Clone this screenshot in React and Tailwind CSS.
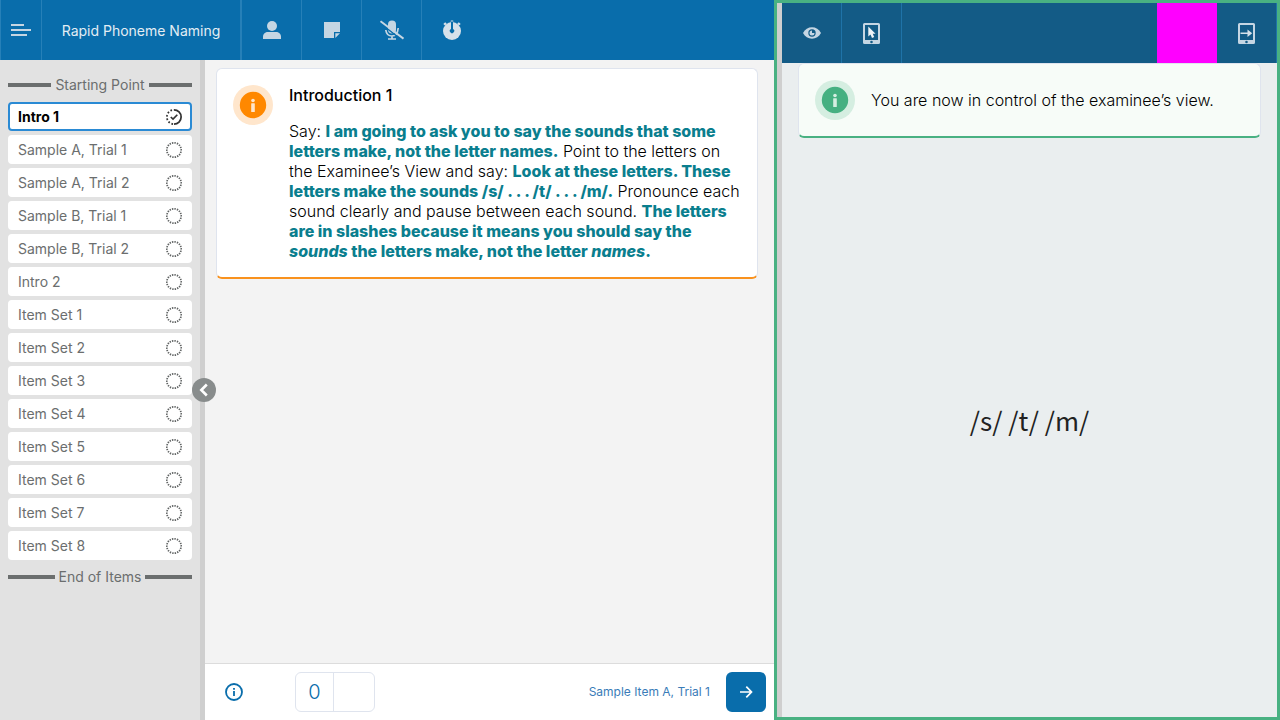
import React from "react";

const ITEMS = [
  "Sample A, Trial 1",
  "Sample A, Trial 2",
  "Sample B, Trial 1",
  "Sample B, Trial 2",
  "Intro 2",
  "Item Set 1",
  "Item Set 2",
  "Item Set 3",
  "Item Set 4",
  "Item Set 5",
  "Item Set 6",
  "Item Set 7",
  "Item Set 8",
];

function DottedCircle() {
  return (
    <svg width="16" height="16" viewBox="0 0 16 16" fill="none" aria-hidden="true">
      <circle cx="8" cy="8" r="7.2" stroke="#5f6262" strokeWidth="1.7" pathLength="54" strokeDasharray="1.7 1.3" strokeDashoffset="1" />
    </svg>
  );
}

function ProgressCircle() {
  return (
    <svg width="16" height="16" viewBox="0.8 0.8 16.4 16.4" fill="none" stroke="#333" aria-hidden="true">
      <path d="M9 1.7A7.3 7.3 0 0 1 9 16.3" strokeWidth="1.8" />
      <path d="M9 16.3A7.3 7.3 0 0 1 9 1.7" strokeWidth="1.8" strokeDasharray="1.7 1.9" strokeDashoffset="-1" />
      <path d="M5.7 9L8 11.2L12.4 6.7" strokeWidth="1.7" />
    </svg>
  );
}

function InfoBadge({ ring, disc, mark }) {
  return (
    <svg className="shrink-0" width="40" height="40" viewBox="0 0 40 40" aria-hidden="true">
      <circle cx="20" cy="20" r="20" fill={ring} />
      <circle cx="20" cy="20" r="13.2" fill={disc} />
      <circle cx="20" cy="15.5" r="1.8" fill={mark} />
      <rect x="18.2" y="18.3" width="3.6" height="8.7" rx="0.5" fill={mark} />
    </svg>
  );
}

function ToolButton({ label, className = "", children }) {
  return (
    <button type="button" aria-label={label} className={"flex h-full w-15 shrink-0 items-center justify-center " + className}>
      {children}
    </button>
  );
}

function Divider({ children }) {
  return (
    <div className="flex h-5 items-center gap-1 text-sm leading-5 text-[#6b6e6e]">
      <span className="h-1 flex-1 bg-[#6b6e6e]" />
      {children}
      <span className="h-1 flex-1 bg-[#6b6e6e]" />
    </div>
  );
}

function Tablet({ children }) {
  return (
    <svg width="17" height="21" viewBox="0.5 0.5 17 21" aria-hidden="true">
      <path fillRule="evenodd" fill="#c5d6e3" d="M2 0.5H16A1.5 1.5 0 0 1 17.5 2V20A1.5 1.5 0 0 1 16 21.5H2A1.5 1.5 0 0 1 0.5 20V2A1.5 1.5 0 0 1 2 0.5ZM2.5 2.5V17.5H15.5V2.5ZM9 18.2A1.3 1.3 0 1 0 9 20.8A1.3 1.3 0 1 0 9 18.2Z" />
      {children}
    </svg>
  );
}

function Say({ children }) {
  return <strong className="font-extrabold text-[#0a7e8e]">{children}</strong>;
}

export default function App() {
  return (
    <div className="flex h-screen w-full font-['Inter','Liberation_Sans',sans-serif] text-black">
      <div className="flex min-w-0 flex-1 flex-col">
        <header className="flex h-15 shrink-0 items-stretch bg-[#096dab]">
          <button type="button" aria-label="Menu" className="flex w-[42px] items-center justify-center border-x border-[#2680b8]">
            <svg width="20" height="12" viewBox="0 0 20 12" fill="#c5d6e3" aria-hidden="true">
              <path d="M0 0H13V2H0ZM0 5H20V7H0ZM0 10H16V12H0Z" />
            </svg>
          </button>
          <h1 className="flex w-[200px] items-center justify-center border-r-2 border-[#2680b8] pt-0.5 text-sm text-[#e3edf4]">
            Rapid Phoneme Naming
          </h1>
          <ToolButton label="Examinee" className="border-r border-[#2680b8]">
            <svg width="18" height="18" viewBox="0 0 18 18" fill="#c5d6e3" aria-hidden="true">
              <circle cx="9" cy="5" r="5" />
              <path d="M0 18V16C0 12.8 2.3 11 5 11H13C15.7 11 18 12.8 18 16V18Q18 18 17 18H1Q0 18 0 18Z" />
            </svg>
          </ToolButton>
          <ToolButton label="Notes" className="border-r border-[#2680b8]">
            <svg width="16" height="16" viewBox="0 0 16 16" fill="#c5d6e3" aria-hidden="true">
              <path d="M0 0H16V10H10V16H0Z" />
              <path d="M11.3 11.3H16L11.3 16Z" />
            </svg>
          </ToolButton>
          <ToolButton label="Microphone off" className="border-r border-[#2680b8]">
            <svg width="24" height="20" viewBox="0 0 24 20" aria-hidden="true">
              <rect x="8" y="0.5" width="8" height="13" rx="4" fill="#c5d6e3" />
              <path d="M5.8 10C6.3 14 8.8 16 12 16S17.7 14 18.2 8M12 16V19M8 19H16" fill="none" stroke="#c5d6e3" strokeWidth="1.7" />
              <path d="M-0.5 2.5L22.5 20.5" stroke="#096dab" strokeWidth="1.5" />
              <path d="M0.5 1.2L23.5 18.7" stroke="#c5d6e3" strokeWidth="2" />
            </svg>
          </ToolButton>
          <ToolButton label="Timer">
            <svg width="18" height="20" viewBox="0 0 18 20" fill="#d6e1ea" aria-hidden="true">
              <path d="M7.8 0.5H10.2V3H7.8ZM0.3 4L2.2 2.2L3.8 3.7L2 5.4ZM15.8 2.2L17.7 4L16 5.4L14.2 3.7Z" />
              <circle cx="9" cy="11" r="9" />
              <path d="M8 1.5H10V9A2.2 2.2 0 1 1 8 9Z" fill="#096dab" />
            </svg>
          </ToolButton>
        </header>

        <div className="flex min-h-0 flex-1">
          <nav aria-label="Items" className="relative w-[205px] shrink-0 border-r-[5px] border-[#cfcfcf] bg-[#e2e2e2] px-2 pt-[15px]">
            <Divider>Starting Point</Divider>
            <ul className="mt-[7px] mb-[7px] flex flex-col gap-1">
              <li>
                <button type="button" aria-current="true" className="flex h-[29px] w-full items-center justify-between rounded border-2 border-[#2a8ad4] bg-white px-2 text-sm font-bold">
                  Intro 1
                  <ProgressCircle />
                </button>
              </li>
              {ITEMS.map((label) => (
                <li key={label}>
                  <button type="button" className="flex h-[29px] w-full items-center justify-between rounded border-2 border-white bg-white px-2 text-sm text-[#6b6e6e]">
                    {label}
                    <DottedCircle />
                  </button>
                </li>
              ))}
            </ul>
            <Divider>End of Items</Divider>
            <button type="button" aria-label="Collapse item list" className="absolute top-1/2 -right-4 flex size-6 -translate-y-1/2 items-center justify-center rounded-full bg-[#888c8c]">
              <svg width="10" height="14" viewBox="0 0 10 14" fill="none" stroke="#fff" strokeWidth="2.6" aria-hidden="true">
                <path d="M7.8 1.5L2.3 7L7.8 12.5" />
              </svg>
            </button>
          </nav>

          <div className="flex min-w-0 flex-1 flex-col bg-[#f3f3f3]">
            <main className="min-h-0 flex-1 pt-2 pr-4 pl-[11px]">
              <section className="flex gap-4 rounded-md border border-b-2 border-[#dfe4ee] border-b-[#f9921e] bg-white p-4">
                <InfoBadge ring="#ffe6cc" disc="#ff8800" mark="#ffe6cc" />
                <div>
                  <h2 className="mb-4 text-base leading-5 font-medium">Introduction 1</h2>
                  <p className="text-base leading-5 font-light">
                    Say: <Say>I am going to ask you to say the sounds that some letters make, not the letter names.</Say> Point
                    to the letters on the Examinee’s View and say: <Say>Look at these letters. These letters make the sounds
                    /s/ . . . /t/ . . . /m/.</Say> Pronounce each sound clearly and pause between each
                    sound. <Say>The letters are in slashes because it means you should say the <em>sounds</em> the letters
                    make, not the letter <em>names</em>.</Say>
                  </p>
                </div>
              </section>
            </main>
            <footer className="flex h-[57px] shrink-0 items-center border-t border-[#dcdcdc] bg-white pr-2 pl-5">
              <button type="button" aria-label="Information">
                <svg width="18" height="18" viewBox="0 0 18 18" fill="none" stroke="#096dab" aria-hidden="true">
                  <circle cx="9" cy="9" r="8" strokeWidth="1.8" />
                  <path d="M9 8V13M9 5V6.8" strokeWidth="1.8" />
                </svg>
              </button>
              <div className="ml-[52px] flex h-10 w-20 rounded-md border border-[#dfe4ee]">
                <output aria-label="Score" className="flex w-[38px] items-center justify-center border-r border-[#dfe4ee] text-xl font-light text-[#096dab]">0</output>
              </div>
              <span className="mr-4 ml-auto text-xs text-[#3a7cb8]">Sample Item A, Trial 1</span>
              <button type="button" aria-label="Next item" className="flex size-10 items-center justify-center rounded-md bg-[#096dab]">
                <svg width="14" height="14" viewBox="0 0 14 14" fill="none" stroke="#fff" strokeWidth="1.7" aria-hidden="true">
                  <path d="M1 7H12.5M7.3 1.7L12.5 7L7.3 12.3" />
                </svg>
              </button>
            </footer>
          </div>
        </div>
      </div>

      <aside aria-label="Examinee’s view" className="flex w-[506px] shrink-0 border-3 border-[#49b182]">
        <div className="w-[5px] shrink-0 bg-[#cfcfcf]" />
        <div className="flex min-w-0 flex-1 flex-col bg-[#eaeeef]">
          <div className="flex h-15 shrink-0 items-stretch bg-[#135b86]">
            <ToolButton label="Show view" className="border-r border-[#1f73a8]">
              <svg width="18" height="12" viewBox="0 0 18 12" aria-hidden="true">
                <path fill="#c5d6e3" d="M0 6C2 2.2 5.2 0.3 9 0.3S16 2.2 18 6C16 9.8 12.8 11.7 9 11.7S2 9.8 0 6Z" />
                <circle cx="9" cy="6" r="3.7" fill="#135b86" />
                <path fill="#c5d6e3" d="M9 3.7V6H11.5A2.5 2.5 0 1 1 9 3.5Z" />
              </svg>
            </ToolButton>
            <ToolButton label="Control view" className="border-r border-[#1f73a8]">
              <Tablet>
                <path fill="#eef3f7" d="M5.8 4V14L8 12L9.5 15.5L11.7 14.5L10.2 11.3H13Z" />
              </Tablet>
            </ToolButton>
            <div className="ml-auto w-15 bg-[#ff00ff]" />
            <ToolButton label="Send to device" className="border-r border-[#1f73a8]">
              <Tablet>
                <path fill="#d6e1ea" d="M3 10H10V7L14.7 10.8L10 14.5V11.6H3Z" />
              </Tablet>
            </ToolButton>
          </div>
          <div className="mx-4 flex items-center gap-4 rounded-md border border-b-2 border-[#dfe4ee] border-b-[#49b182] bg-[#f7fcf8] p-4">
            <InfoBadge ring="#d5eee1" disc="#45b081" mark="#d5eee1" />
            <p className="text-base font-light">You are now in control of the examinee’s view.</p>
          </div>
          <div className="flex flex-1 items-center justify-center pb-4 font-['Noto_Sans_CJK_JP',sans-serif] text-[26px] text-[#222]">
            /s/ /t/ /m/
          </div>
        </div>
      </aside>
    </div>
  );
}
